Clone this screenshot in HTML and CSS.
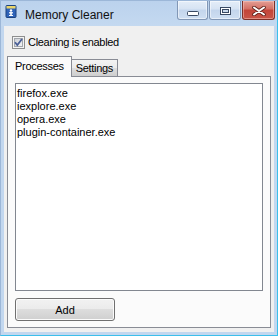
FILE: index.html
```html
<!DOCTYPE html>
<html lang="en">
<head>
    <meta charset="UTF-8">
    <title>Memory Cleaner</title>
    <link rel="stylesheet" href="styles.css">
</head>
<body>
    <div class="window">
        <div class="titlebar">
            <svg class="app-icon" width="16" height="16" viewBox="0 0 16 16">
                <rect x="3" y="1.5" width="10" height="12" rx="1" fill="#2f63b8" stroke="#1c437f"/>
                <rect x="3.5" y="2" width="9" height="2.5" fill="#e9d46a"/>
                <circle cx="8" cy="6.5" r="1.2" fill="#fff"/>
                <rect x="6" y="8.2" width="4" height="1.2" fill="#fff"/>
                <rect x="7.2" y="8.2" width="1.6" height="3.6" fill="#fff"/>
                <rect x="6" y="11" width="4" height="1" fill="#fff"/>
            </svg>
            <span class="title">Memory Cleaner</span>
            <div class="caption-buttons">
                <div class="cap cap-min">
                    <svg width="12" height="5" viewBox="0 0 12 5"><rect x="0.5" y="0.5" width="11" height="4" rx="1" fill="#fff" stroke="#3a4a63"/></svg>
                </div>
                <div class="cap cap-max">
                    <svg width="11" height="8" viewBox="0 0 11 8"><rect x="0.5" y="0.5" width="10" height="7" fill="#fff" stroke="#3a4a63"/><rect x="2.5" y="2.5" width="6" height="3" fill="#c9d8ea" stroke="#3a4a63"/></svg>
                </div>
                <div class="cap cap-close">
                    <svg width="14" height="10" viewBox="0 0 14 10">
                        <path d="M2 1.5 L12 8.5 M12 1.5 L2 8.5" stroke="#5a1f18" stroke-width="3.6" stroke-linecap="round"/>
                        <path d="M2 1.5 L12 8.5 M12 1.5 L2 8.5" stroke="#fff" stroke-width="2" stroke-linecap="round"/>
                    </svg>
                </div>
            </div>
        </div>
        <div class="client">
            <label class="check">
                <svg width="13" height="13" viewBox="0 0 13 13">
                    <defs>
                        <linearGradient id="cb" x1="0" y1="0" x2="1" y2="1">
                            <stop offset="0" stop-color="#cbcfd5"/>
                            <stop offset="1" stop-color="#f6f6f6"/>
                        </linearGradient>
                    </defs>
                    <rect x="0.5" y="0.5" width="12" height="12" fill="#f4f4f4" stroke="#8e8f8f"/>
                    <rect x="2.5" y="2.5" width="8" height="8" fill="url(#cb)" stroke="#a3a7ad"/>
                    <path d="M3 6.2 L5.3 9 L10 3" fill="none" stroke="#4a5f97" stroke-width="1.8"/>
                </svg>
                <span>Cleaning is enabled</span>
            </label>
            <div class="tabs">
                <div class="tab active">Processes</div>
                <div class="tab">Settings</div>
            </div>
            <div class="page">
                <ul class="listbox">
                    <li>firefox.exe</li>
                    <li>iexplore.exe</li>
                    <li>opera.exe</li>
                    <li>plugin-container.exe</li>
                </ul>
                <div class="actions">
                    <button class="btn">Add</button>
                </div>
            </div>
        </div>
    </div>
</body>
</html>
```

FILE: styles.css
```css
body {
    margin: 0;
    background: #fff;
    font-family: "Liberation Sans", Arial, sans-serif;
    font-size: 11px;
    color: #000;
}
.window {
    width: 278px;
    height: 336px;
    box-sizing: border-box;
    display: flex;
    flex-direction: column;
    background: #c2d7ef;
    border: 1px solid;
    border-color: #9cb7d8 #3bbfeb #3bbfeb #9cb7d8;
}
.titlebar {
    height: 25px;
    display: flex;
    align-items: flex-start;
    background: linear-gradient(#bbd2ed, #c4d9f0);
}
.app-icon {
    margin: 3px 0 0 2px;
}
.title {
    margin: 7px 0 0 6px;
    font-size: 12px;
    line-height: 15px;
    color: #111;
}
.caption-buttons {
    margin-left: auto;
    margin-right: 2px;
    display: flex;
    gap: 1px;
}
.cap {
    height: 19px;
    box-sizing: border-box;
    display: flex;
    align-items: center;
    justify-content: center;
    border: 1px solid #8197b6;
    border-top: 0;
    border-radius: 0 0 3px 3px;
    background: linear-gradient(#e4edf8, #d6e3f3 45%, #c3d5ec 50%, #cfdff2);
    box-shadow: inset 0 0 0 1px rgba(255, 255, 255, 0.5);
}
.cap-min {
    width: 31px;
}
.cap-min svg {
    margin-top: 7px;
}
.cap-max {
    width: 32px;
}
.cap-max svg {
    margin-top: 2px;
}
.cap-close {
    width: 33px;
    border-color: #7d3028;
    background: linear-gradient(#e39f96, #d46f63 45%, #c24438 50%, #c85548);
    box-shadow: inset 0 0 0 1px rgba(255, 210, 200, 0.45);
}
.cap-close svg {
    margin-top: 1px;
}
.client {
    flex: 1;
    display: flex;
    flex-direction: column;
    margin: 0 3px 3px 3px;
    background: #f0f0f0;
}
.check {
    height: 13px;
    margin: 10px 0 0 8px;
    display: flex;
    align-items: center;
    gap: 3px;
    line-height: 13px;
    letter-spacing: -0.3px;
}
.check svg {
    display: block;
}
.tabs {
    margin: 7px 0 0 3px;
    display: flex;
    align-items: flex-end;
}
.tab {
    height: 17px;
    box-sizing: border-box;
    padding: 1px 4px 0 4px;
    line-height: 14px;
    letter-spacing: -0.3px;
    border: 1px solid #898c95;
    border-bottom: 0;
    border-left: 0;
    background: linear-gradient(#f3f3f3, #ebebeb 50%, #dddddd 51%, #cfcfcf);
}
.tab.active {
    height: 21px;
    padding: 2px 7px 0 7px;
    margin-bottom: -1px;
    border-left: 1px solid #898c95;
    background: #fbfbfb;
    position: relative;
    z-index: 1;
}
.page {
    flex: 1;
    display: flex;
    flex-direction: column;
    margin: 0 3px 4px 3px;
    padding: 6px 7px 6px 7px;
    border: 1px solid #898c95;
    background: #fbfbfb;
}
.listbox {
    flex: 1;
    margin: 0;
    padding: 3px 0 0 1px;
    list-style: none;
    line-height: 13px;
    border: 1px solid #828790;
    background: #fff;
}
.actions {
    margin-top: 7px;
}
.btn {
    width: 100px;
    height: 23px;
    display: block;
    padding: 0;
    font-family: inherit;
    font-size: 11px;
    color: #000;
    border: 1px solid #707070;
    border-radius: 3px;
    background: linear-gradient(#f2f2f2, #ebebeb 48%, #dddddd 50%, #cfcfcf);
    box-shadow: inset 0 0 0 1px #fbfbfb;
}
```
